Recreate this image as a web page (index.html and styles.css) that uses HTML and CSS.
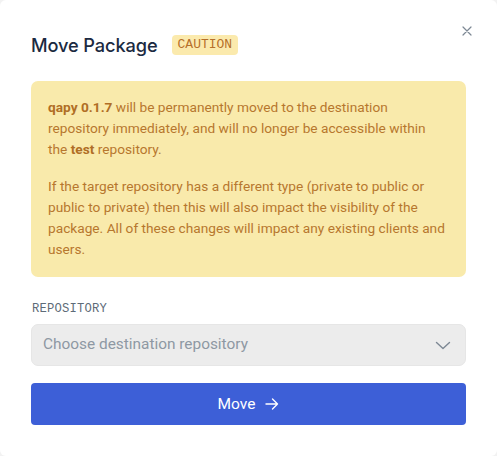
FILE: index.html
```html
<!DOCTYPE html>
<html>
<head>
<meta charset="utf-8">
<link rel="stylesheet" href="styles.css">
</head>
<body>
<div class="modal">
  <button class="close" aria-label="Close">
    <svg width="10" height="10" viewBox="0 0 10 10"><path d="M1 1L9 9M9 1L1 9" stroke="#7d8894" stroke-width="1.2" stroke-linecap="round"/></svg>
  </button>
  <div class="header">
    <h1 class="title">Move Package</h1>
    <span class="badge">CAUTION</span>
  </div>
  <div class="alert">
    <p><strong>qapy 0.1.7</strong> will be permanently moved to the destination repository immediately, and will no longer be accessible within the <strong>test</strong> repository.</p>
    <p>If the target repository has a different type (private to public or public to private) then this will also impact the visibility of the package. All of these changes will impact any existing clients and users.</p>
  </div>
  <div class="field">
    <label class="label">REPOSITORY</label>
    <div class="select">
      <span class="placeholder">Choose destination repository</span>
      <svg class="chevron" width="16" height="9" viewBox="0 0 16 9"><path d="M1.5 1.5L8 7.5L14.5 1.5" fill="none" stroke="#7d8894" stroke-width="1.4" stroke-linecap="round" stroke-linejoin="round"/></svg>
    </div>
  </div>
  <button class="move">Move <svg class="arrow" width="14" height="12" viewBox="0 0 14 12"><path d="M1 6H12.5M7.5 1L12.5 6L7.5 11" fill="none" stroke="#fff" stroke-width="1.4" stroke-linecap="round" stroke-linejoin="round"/></svg></button>
</div>
</body>
</html>
```

FILE: styles.css
```css
html, body {
  margin: 0;
  padding: 0;
  background: #f2f2f2;
}
body {
  font-family: Roboto, "Liberation Sans", Arial, sans-serif;
}
.modal {
  position: relative;
  box-sizing: border-box;
  width: 497px;
  height: 456px;
  background: #fff;
  border-radius: 6px;
  padding: 31px 31px 31px 31px;
  display: flex;
  flex-direction: column;
}
.close {
  position: absolute;
  top: 25px;
  right: 24px;
  width: 12px;
  height: 12px;
  padding: 0;
  border: 0;
  background: none;
  display: flex;
  align-items: center;
  justify-content: center;
}
.header {
  display: flex;
  align-items: center;
  gap: 14px;
  height: 27px;
}
.title {
  margin: 0;
  font-family: Inter, Roboto, sans-serif;
  font-size: 18.2px;
  font-weight: 500;
  color: #1b2a41;
  letter-spacing: -0.1px;
}
.badge {
  font-family: "Liberation Mono", "DejaVu Sans Mono", monospace;
  font-size: 13px;
  color: #b6702a;
  background: #fbeaad;
  border-radius: 4px;
  padding: 0 6px;
  height: 20px;
  line-height: 20px;
}
.alert {
  margin-top: 23px;
  background: #f9eaab;
  border-radius: 7px;
  padding: 16px 20px 17px 17px;
  color: #b7772e;
  font-size: 13.7px;
  line-height: 21px;
}
.alert p {
  margin: 0;
}
.alert p + p {
  margin-top: 16px;
}
.alert strong {
  font-weight: 700;
  color: #b06e25;
}
.field {
  margin-top: 24px;
  display: flex;
  flex-direction: column;
  gap: 7px;
}
.label {
  font-family: "Liberation Mono", "DejaVu Sans Mono", monospace;
  font-size: 12.2px;
  letter-spacing: 0.2px;
  line-height: 16px;
  color: #5d6b78;
  padding-left: 1px;
}
.select {
  height: 42px;
  box-sizing: border-box;
  background: #ececec;
  border: 1px solid #e6e6e6;
  border-radius: 7px;
  display: flex;
  align-items: center;
  justify-content: space-between;
  padding: 0 14px 0 11px;
}
.placeholder {
  font-size: 15.4px;
  color: #8e98a3;
  margin-top: -2px;
}
.move {
  margin-top: 17px;
  height: 42px;
  border: 0;
  border-radius: 4px;
  background: #3d5fd7;
  color: #fff;
  font-family: Roboto, "Liberation Sans", sans-serif;
  font-size: 15.5px;
  display: flex;
  align-items: center;
  justify-content: center;
  gap: 10px;
  padding: 0;
}
.arrow {
  display: block;
}
```
